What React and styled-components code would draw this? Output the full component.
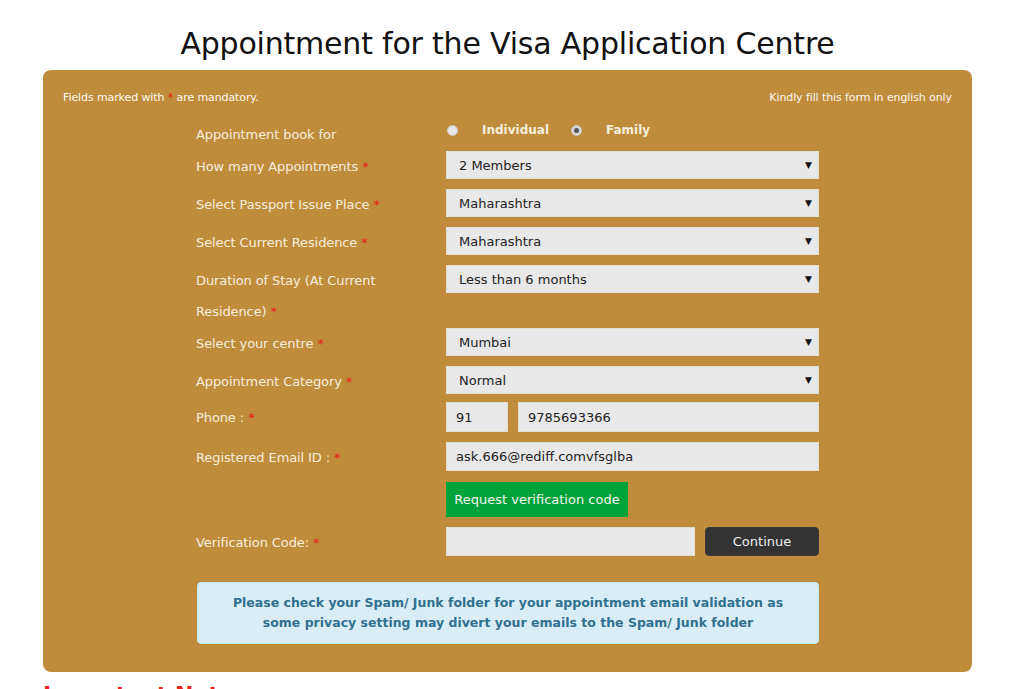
import styled, { createGlobalStyle } from "styled-components";

const GlobalStyle = createGlobalStyle`
    html, body {
        margin: 0;
        padding: 0;
        background: #fff;
        font-family: "DejaVu Sans", Verdana, sans-serif;
    }
`;

function App() {
    return (
        <Page>
            <GlobalStyle />
            <Title>Appointment for the Visa Application Centre</Title>

            <Panel>
                <TopBar>
                    <span>Fields marked with <Star>*</Star> are mandatory.</span>
                    <span>Kindly fill this form in english only</span>
                </TopBar>

                <Form>
                    <Row $top={-1} $gap={1}>
                        <Label>Appointment book for</Label>
                        <RadioGroup>
                            <RadioItem>
                                <Radio />
                                Individual
                            </RadioItem>
                            <RadioItem>
                                <Radio $checked />
                                Family
                            </RadioItem>
                        </RadioGroup>
                    </Row>

                    <Row>
                        <Label>How many Appointments <Star>*</Star></Label>
                        <Select value="2 Members" />
                    </Row>

                    <Row>
                        <Label>Select Passport Issue Place <Star>*</Star></Label>
                        <Select value="Maharashtra" />
                    </Row>

                    <Row>
                        <Label>Select Current Residence <Star>*</Star></Label>
                        <Select value="Maharashtra" />
                    </Row>

                    <Row $gap={1}>
                        <Label>Duration of Stay (At Current<br />Residence) <Star>*</Star></Label>
                        <Select value="Less than 6 months" />
                    </Row>

                    <Row>
                        <Label>Select your centre <Star>*</Star></Label>
                        <Select value="Mumbai" />
                    </Row>

                    <Row $gap={5}>
                        <Label>Appointment Category <Star>*</Star></Label>
                        <Select value="Normal" />
                    </Row>

                    <Row $gap={9}>
                        <Label>Phone : <Star>*</Star></Label>
                        <PhoneWrap>
                            <Input $w="62px" defaultValue="91" />
                            <Input defaultValue="9785693366" />
                        </PhoneWrap>
                    </Row>

                    <Row $gap={9}>
                        <Label>Registered Email ID : <Star>*</Star></Label>
                        <Input $h="29px" defaultValue="ask.666@rediff.comvfsglba" />
                    </Row>

                    <Row $gap={10}>
                        <span />
                        <GreenButton>Request verification code</GreenButton>
                    </Row>

                    <Row $gap={24}>
                        <Label>Verification Code: <Star>*</Star></Label>
                        <VerifyWrap>
                            <Input $h="29px" />
                            <DarkButton>Continue</DarkButton>
                        </VerifyWrap>
                    </Row>

                    <Notice>
                        Please check your Spam/ Junk folder for your appointment email validation as
                        some privacy setting may divert your emails to the Spam/ Junk folder
                    </Notice>
                </Form>
            </Panel>

            <Important>Important Note</Important>
        </Page>
    );
}

function Select({ value }) {
    return (
        <SelectBox>
            <span>{value}</span>
            <Caret>▼</Caret>
        </SelectBox>
    );
}

const Page = styled.div`
    width: 929px;
    margin-left: 43px;
    padding-top: 26px;
`;

const Title = styled.h1`
    margin: 0 0 8px;
    text-align: center;
    font-size: 30px;
    font-weight: normal;
    line-height: 36px;
    color: #111;
    letter-spacing: -0.2px;
`;

const Panel = styled.div`
    background: #bf8c3c;
    border-radius: 8px;
    padding: 19px 20px 29px;
    height: 602px;
    box-sizing: border-box;
`;

const TopBar = styled.div`
    display: flex;
    justify-content: space-between;
    font-size: 11px;
    color: #fdf8ee;
    line-height: 18px;
    letter-spacing: -0.1px;
`;

const Star = styled.span`
    color: #e8231c;
`;

const Form = styled.div`
    width: 623px;
    margin: 13px 0 0 133px;
`;

const Row = styled.div`
    display: grid;
    grid-template-columns: 250px 373px;
    align-items: start;
    margin-top: ${(p) => (p.$top !== undefined ? p.$top : 0)}px;
    margin-bottom: ${(p) => (p.$gap !== undefined ? p.$gap : 7)}px;
`;

const Label = styled.div`
    font-size: 13px;
    line-height: 31px;
    color: #f6eedb;
    letter-spacing: -0.1px;
`;

const RadioGroup = styled.div`
    display: flex;
    align-items: center;
    height: 24px;
    margin-top: -1px;
    padding-left: 1px;
    gap: 22px;
`;

const RadioItem = styled.label`
    display: flex;
    align-items: center;
    gap: 24px;
    font-size: 12px;
    font-weight: bold;
    color: #f6eedb;
`;

const Radio = styled.span`
    width: 11px;
    height: 11px;
    border-radius: 50%;
    background: ${(p) => (p.$checked ? "#d8d8d8" : "#e6e6e6")};
    border: 1px solid #c9c9c9;
    box-sizing: border-box;
    display: flex;
    align-items: center;
    justify-content: center;

    &::after {
        content: "";
        width: 5px;
        height: 5px;
        border-radius: 50%;
        background: ${(p) => (p.$checked ? "#555" : "transparent")};
    }
`;

const SelectBox = styled.div`
    height: 28px;
    background: #e8e8e8;
    border: 1px solid #e2ddd2;
    box-sizing: border-box;
    display: flex;
    align-items: center;
    justify-content: space-between;
    padding: 0 6px 0 12px;
    font-size: 13px;
    color: #222;
`;

const Caret = styled.span`
    font-size: 9px;
    color: #111;
`;

const PhoneWrap = styled.div`
    display: flex;
    gap: 10px;
`;

const VerifyWrap = styled.div`
    display: flex;
    gap: 10px;
    align-items: center;
`;

const Input = styled.input`
    width: ${(p) => p.$w || "100%"};
    flex: ${(p) => (p.$w ? "none" : "1")};
    height: ${(p) => p.$h || "30px"};
    background: #e8e8e8;
    border: 1px solid #e2ddd2;
    box-sizing: border-box;
    padding: 0 9px;
    font-family: "DejaVu Sans", Verdana, sans-serif;
    font-size: 13px;
    color: #222;
    outline: none;
    min-width: 0;
`;

const GreenButton = styled.button`
    width: 182px;
    height: 35px;
    background: #00a23a;
    border: none;
    color: #f4f4f4;
    font-family: "DejaVu Sans", Verdana, sans-serif;
    font-size: 13px;
    padding: 0;
    text-align: center;
    cursor: pointer;
`;

const DarkButton = styled.button`
    width: 114px;
    flex: none;
    height: 29px;
    background: #333;
    border: 1px solid #3a3a3a;
    border-radius: 4px;
    color: #eee;
    font-family: "DejaVu Sans", Verdana, sans-serif;
    font-size: 13px;
    cursor: pointer;
`;

const Notice = styled.div`
    margin-left: 1px;
    width: 622px;
    box-sizing: border-box;
    background: #d9edf7;
    border: 1px solid #bce8f1;
    border-radius: 4px;
    padding: 10px 24px;
    text-align: center;
    font-size: 12.5px;
    font-weight: bold;
    line-height: 20px;
    color: #31708f;
`;

const Important = styled.h2`
    margin: 10px 0 0;
    font-size: 22px;
    font-weight: bold;
    color: #e8231c;
    line-height: 26px;
`;

export default App;
